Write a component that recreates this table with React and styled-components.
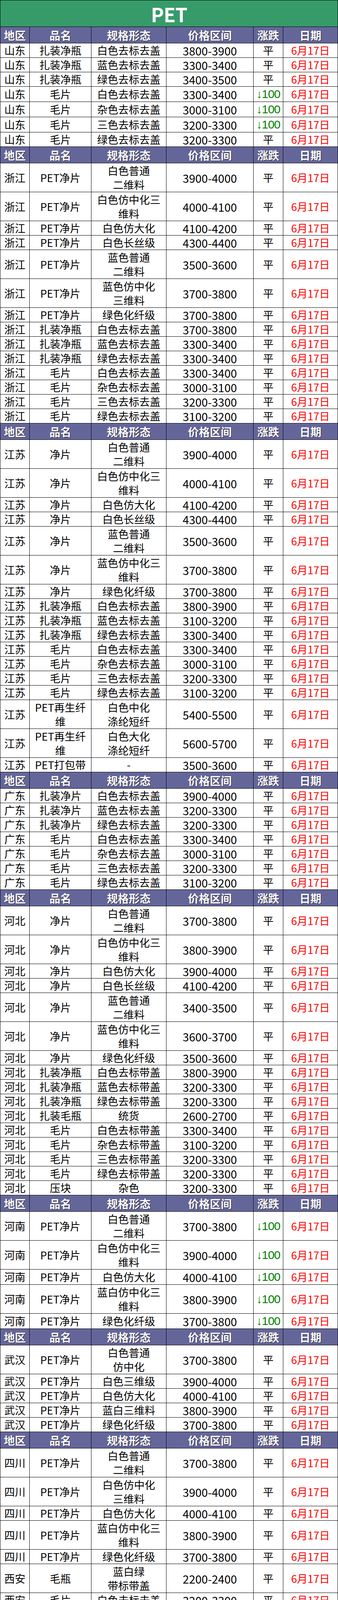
import styled, { createGlobalStyle } from "styled-components";

const GlobalStyle = createGlobalStyle`
  body {
    margin: 0;
    background: #fff;
    font-family: "Noto Sans CJK SC", "Noto Sans", sans-serif;
  }
`;

const COLS = "76px 158px 192px 223px 76px 140px";
const LINE = 37;

const Sheet = styled.div`
  width: 865px;
  border-left: 1px solid #000;
  border-top: 1px solid #000;
  box-sizing: border-box;
`;

const Title = styled.div`
  height: 68px;
  box-sizing: border-box;
  background: #369b69;
  border-right: 1px solid #000;
  border-bottom: 1px solid #000;
  display: flex;
  align-items: center;
  justify-content: center;
  color: #fff;
  font-size: 50px;
  font-weight: 700;
  letter-spacing: -1px;
`;

const Row = styled.div`
  display: grid;
  grid-template-columns: ${COLS};
  margin-left: -1px;
  height: ${({ $h }) => $h}px;
`;

const Cell = styled.div`
  box-sizing: border-box;
  border-right: 1px solid #000;
  border-bottom: 1px solid #000;
  display: flex;
  align-items: center;
  justify-content: center;
  text-align: center;
  white-space: pre-line;
  font-size: 27px;
  line-height: 36px;
  color: #000;
`;

const FirstCell = styled(Cell)`
  border-left: 1px solid #000;
`;

const HeadCell = styled(Cell)`
  background: #64669a;
  color: #fff;
  font-size: 28px;
  font-weight: 700;
  text-shadow: 1px 1px 1px #1c1c2e;
`;

const HeadFirst = styled(HeadCell)`
  border-left: 1px solid #000;
`;

const Price = styled(Cell)`
  font-size: 29px;
`;

const Change = styled(Cell)`
  color: ${({ $down }) => ($down ? "#008000" : "#000")};
  font-family: ${({ $down }) =>
    $down ? '"Liberation Sans", "Noto Sans CJK SC", sans-serif' : "inherit"};
  font-size: ${({ $down }) => ($down ? "30px" : "27px")};
  letter-spacing: ${({ $down }) => ($down ? "-1px" : "0")};
`;

const DateCell = styled(Cell)`
  color: #ff0000;
`;

const HEADERS = ["地区", "品名", "规格形态", "价格区间", "涨跌", "日期"];

const D = "↓100";
const P = "平";

const sections = [
  {
    region: "山东",
    rows: [
      ["扎装净瓶", "白色去标去盖", "3800-3900", P],
      ["扎装净瓶", "蓝色去标去盖", "3300-3400", P],
      ["扎装净瓶", "绿色去标去盖", "3400-3500", P],
      ["毛片", "白色去标去盖", "3300-3400", D],
      ["毛片", "杂色去标去盖", "3000-3100", D],
      ["毛片", "三色去标去盖", "3200-3300", D],
      ["毛片", "绿色去标去盖", "3200-3300", P],
    ],
  },
  {
    region: "浙江",
    rows: [
      ["PET净片", "白色普通\n二维料", "3900-4000", P],
      ["PET净片", "白色仿中化三\n维料", "4000-4100", P],
      ["PET净片", "白色仿大化", "4100-4200", P],
      ["PET净片", "白色长丝级", "4300-4400", P],
      ["PET净片", "蓝色普通\n二维料", "3500-3600", P],
      ["PET净片", "蓝色仿中化\n三维料", "3700-3800", P],
      ["PET净片", "绿色化纤级", "3700-3800", P],
      ["扎装净瓶", "白色去标去盖", "3700-3800", P],
      ["扎装净瓶", "蓝色去标去盖", "3300-3400", P],
      ["扎装净瓶", "绿色去标去盖", "3300-3400", P],
      ["毛片", "白色去标去盖", "3300-3400", P],
      ["毛片", "杂色去标去盖", "3000-3100", P],
      ["毛片", "三色去标去盖", "3200-3300", P],
      ["毛片", "绿色去标去盖", "3100-3200", P],
    ],
  },
  {
    region: "江苏",
    rows: [
      ["净片", "白色普通\n二维料", "3900-4000", P],
      ["净片", "白色仿中化三\n维料", "4000-4100", P],
      ["净片", "白色仿大化", "4100-4200", P],
      ["净片", "白色长丝级", "4300-4400", P],
      ["净片", "蓝色普通\n二维料", "3500-3600", P],
      ["净片", "蓝色仿中化三\n维料", "3700-3800", P],
      ["净片", "绿色化纤级", "3700-3800", P],
      ["扎装净瓶", "白色去标去盖", "3800-3900", P],
      ["扎装净瓶", "蓝色去标去盖", "3100-3200", P],
      ["扎装净瓶", "绿色去标去盖", "3300-3400", P],
      ["毛片", "白色去标去盖", "3300-3400", P],
      ["毛片", "杂色去标去盖", "3000-3100", P],
      ["毛片", "三色去标去盖", "3200-3300", P],
      ["毛片", "绿色去标去盖", "3100-3200", P],
      ["PET再生纤\n维", "白色中化\n涤纶短纤", "5400-5500", P],
      ["PET再生纤\n维", "白色大化\n涤纶短纤", "5600-5700", P],
      ["PET打包带", "-", "3500-3600", P],
    ],
  },
  {
    region: "广东",
    rows: [
      ["扎装净片", "白色去标去盖", "3900-4000", P],
      ["扎装净片", "蓝色去标去盖", "3200-3300", P],
      ["扎装净片", "绿色去标去盖", "3200-3300", P],
      ["毛片", "白色去标去盖", "3300-3400", P],
      ["毛片", "杂色去标去盖", "3000-3100", P],
      ["毛片", "三色去标去盖", "3200-3300", P],
      ["毛片", "绿色去标去盖", "3100-3200", P],
    ],
  },
  {
    region: "河北",
    rows: [
      ["净片", "白色普通\n二维料", "3700-3800", P],
      ["净片", "白色仿中化三\n维料", "3800-3900", P],
      ["净片", "白色仿大化", "3900-4000", P],
      ["净片", "白色长丝级", "4100-4200", P],
      ["净片", "蓝色普通\n二维料", "3400-3500", P],
      ["净片", "蓝色仿中化三\n维料", "3600-3700", P],
      ["净片", "绿色化纤级", "3500-3600", P],
      ["扎装净瓶", "白色去标带盖", "3800-3900", P],
      ["扎装净瓶", "蓝色去标带盖", "3200-3300", P],
      ["扎装净瓶", "绿色去标带盖", "3200-3300", P],
      ["扎装毛瓶", "统货", "2600-2700", P],
      ["毛片", "白色去标带盖", "3300-3400", P],
      ["毛片", "杂色去标带盖", "3100-3200", P],
      ["毛片", "三色去标带盖", "3200-3300", P],
      ["毛片", "绿色去标带盖", "3200-3300", P],
      ["压块", "杂色", "3200-3300", P],
    ],
  },
  {
    region: "河南",
    rows: [
      ["PET净片", "白色普通\n二维料", "3700-3800", D],
      ["PET净片", "白色仿中化三\n维料", "3900-4000", D],
      ["PET净片", "白色仿大化", "4000-4100", D],
      ["PET净片", "蓝白仿中化三\n维料", "3800-3900", D],
      ["PET净片", "绿色化纤级", "3700-3800", D],
    ],
  },
  {
    region: "武汉",
    rows: [
      ["PET净片", "白色普通\n仿中化", "3700-3800", P],
      ["PET净片", "白色三维级", "3900-4000", P],
      ["PET净片", "白色仿大化", "4000-4100", P],
      ["PET净片", "蓝白三维料", "3800-3900", P],
      ["PET净片", "绿色化纤级", "3700-3800", P],
    ],
  },
  {
    region: "四川",
    rows: [
      ["PET净片", "白色普通\n二维料", "3700-3800", P],
      ["PET净片", "白色仿中化\n三维料", "3900-4000", P],
      ["PET净片", "白色仿大化", "4000-4100", P],
      ["PET净片", "蓝白仿中化三\n维料", "3800-3900", P],
      ["PET净片", "绿色化纤级", "3700-3800", P],
      ["毛瓶", "蓝白绿\n带标带盖", "2200-2400", P, "西安"],
      ["毛片", "白色去标去盖", "3200-3300", P, "西安"],
      ["净片", "白色仿大化", "4000-4100", P, "西安"],
      ["净片", "蓝白普通", "3700-3800", P, "西安"],
    ],
  },
];

const rowHeight = (name, spec, change) => {
  const lines = Math.max(name.split("\n").length, spec.split("\n").length);
  if (lines === 1 && change !== P) return LINE + 2;
  return lines * LINE;
};

const HeaderRow = () => (
  <Row $h={42}>
    {HEADERS.map((h, i) =>
      i === 0 ? <HeadFirst key={h}>{h}</HeadFirst> : <HeadCell key={h}>{h}</HeadCell>
    )}
  </Row>
);

const DataRow = ({ region, name, spec, price, change }) => (
  <Row $h={rowHeight(name, spec, change)}>
    <FirstCell>{region}</FirstCell>
    <Cell>{name}</Cell>
    <Cell>{spec}</Cell>
    <Price>{price}</Price>
    <Change $down={change !== P}>{change}</Change>
    <DateCell>6月17日</DateCell>
  </Row>
);

const App = () => {
  return (
    <>
      <GlobalStyle />
      <Sheet>
        <Title>PET</Title>
        {sections.map((section) => (
          <div key={section.region}>
            <HeaderRow />
            {section.rows.map(([name, spec, price, change, region], i) => (
              <DataRow
                key={i}
                region={region || section.region}
                name={name}
                spec={spec}
                price={price}
                change={change}
              />
            ))}
          </div>
        ))}
      </Sheet>
    </>
  );
};

export default App;
